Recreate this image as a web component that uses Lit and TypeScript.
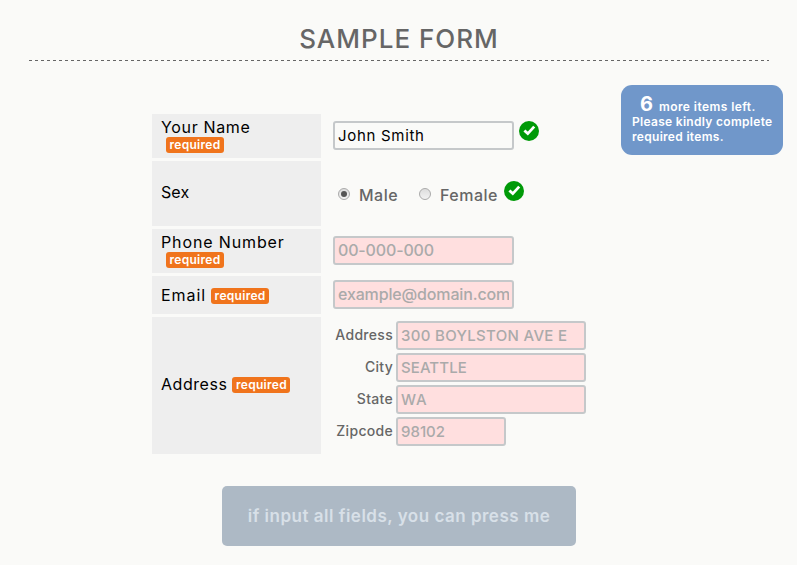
import { LitElement, html, css, svg } from "lit";
import { customElement } from "lit/decorators.js";

const check = html`<svg class="check" viewBox="0 0 20 20" width="20" height="20">
  ${svg`<circle cx="10" cy="10" r="10" fill="#009a08"></circle>
  <path d="M5.4 9.4 L8.8 12.6 L15.2 5.6" fill="none" stroke="#fff" stroke-width="2.8"></path>`}
</svg>`;

const required = html`<span class="required">required</span>`;

const addressFields = [
  { id: "street", label: "Address", placeholder: "300 BOYLSTON AVE E" },
  { id: "city", label: "City", placeholder: "SEATTLE" },
  { id: "state", label: "State", placeholder: "WA" },
  { id: "zip", label: "Zipcode", placeholder: "98102" },
];

@customElement("app-root")
export class AppRoot extends LitElement {
  static styles = css`
    :host {
      display: block;
      position: relative;
      box-sizing: border-box;
      height: 565px;
      overflow: hidden;
      background: #fafaf8;
      color: #666;
      font-family: Inter, "Open Sans", sans-serif;
    }
    * { box-sizing: border-box; }
    h1 {
      margin: 0 28px 0 29px;
      height: 61px;
      padding-top: 24px;
      text-align: center;
      font-size: 26px;
      line-height: 30px;
      font-weight: 500;
      letter-spacing: 1px;
      background: repeating-linear-gradient(90deg, #666 0 3px, transparent 3px 6px) left bottom / 100% 1px no-repeat;
    }
    .form {
      display: grid;
      grid-template-columns: 169px 1fr;
      grid-template-rows: 44px 65px 44px 38px 137px;
      gap: 3px 12.5px;
      margin: 53px 0 0 151.5px;
    }
    .head {
      display: flex;
      align-items: center;
      padding: 0 0 1px 9.5px;
      background: #eee;
      color: #000;
      font-size: 16px;
      line-height: 18px;
      letter-spacing: 0.65px;
    }
    .head.stack {
      flex-direction: column;
      align-items: flex-start;
      justify-content: flex-start;
      padding-top: 4px;
    }
    .head.stack .required { margin: 1px 0 0 5px; }
    .head.phone > span:first-child { letter-spacing: 0.87px; }
    .head.email { letter-spacing: 0.95px; }
    .head.address { letter-spacing: 0.55px; padding-bottom: 4px; }
    .head.sex { letter-spacing: 0.1px; padding-bottom: 4px; }
    .head.stack .required,
    .required {
      height: 16px;
      width: 58px;
      border-radius: 3px;
      background: #f0741c;
      color: #fff;
      font-size: 12px;
      line-height: 15px;
      font-weight: 600;
      letter-spacing: 0.3px;
      text-align: center;
    }
    .email .required,
    .address .required { margin: 3px 0 0 5px; }
    .cell { display: flex; align-items: center; padding-bottom: 2px; }
    input[type="text"] {
      width: 181px;
      height: 29px;
      margin: 0;
      padding: 0 3px;
      border: 2px solid #c5c8ca;
      border-radius: 3px;
      outline: none;
      background: #ffdfdf;
      color: #000;
      font: 500 16px Inter, sans-serif;
      letter-spacing: -0.15px;
    }
    input::placeholder { color: #aaa; opacity: 1; }
    input.filled {
      background: #fafaf8;
      font-size: 15px;
      font-weight: 400;
      letter-spacing: 0.7px;
    }
    .cell.name { padding-bottom: 1px; }
    .cell.name .check { margin: 0 0 9px 5px; }
    .sex-cell {
      font-size: 16px;
      font-weight: 500;
      line-height: 20px;
      letter-spacing: 0.5px;
      padding: 3px 0 0 5px;
    }
    .sex-cell .check { margin: 0 0 9px 6px; }
    .radio {
      width: 12px;
      height: 12px;
      margin: 0 9px 3px 0;
      border: 1px solid #aaa;
      border-radius: 50%;
      background: linear-gradient(#ddd, #f2f2f2);
      display: flex;
      align-items: center;
      justify-content: center;
    }
    .radio.on::before {
      content: "";
      width: 6px;
      height: 6px;
      border-radius: 50%;
      background: #555;
    }
    .male { width: 60px; }
    .lines {
      display: grid;
      grid-template-columns: 60px auto;
      grid-auto-rows: 29px;
      gap: 3px;
      align-content: start;
      justify-content: start;
      padding-top: 4px;
    }
    .lines label {
      text-align: right;
      font-size: 14px;
      line-height: 28px;
      font-weight: 500;
      letter-spacing: 0.3px;
    }
    .lines input[type="text"] { width: 190px; font-size: 15px; }
    .lines input#street { letter-spacing: 0.32px; }
    .lines input#city { letter-spacing: 0.1px; }
    .lines input#state { letter-spacing: 0.9px; }
    .lines input#zip { width: 110px; letter-spacing: 0; }
    .notice {
      position: absolute;
      left: 621px;
      top: 85px;
      width: 162px;
      height: 70px;
      padding: 9px 0 0 11px;
      border-radius: 11px;
      background: #7097ca;
      color: #fff;
      font-size: 12px;
      line-height: 15px;
      font-weight: 600;
      letter-spacing: 0.3px;
      white-space: nowrap;
    }
    .count {
      display: flex;
      align-items: baseline;
      height: 20px;
      padding-left: 8px;
      letter-spacing: 0.42px;
    }
    .count b {
      width: 19px;
      font-size: 20px;
      line-height: 20px;
      font-weight: 700;
      letter-spacing: 0;
    }
    .submit {
      display: block;
      width: 354px;
      height: 60px;
      margin: 32px 0 0 222px;
      padding: 0;
      border: 0;
      border-radius: 5px;
      background: #adb9c5;
      color: #d8e0e8;
      font: 600 17px Inter, sans-serif;
      letter-spacing: 0.5px;
    }
  `;

  render() {
    return html`
      <h1>SAMPLE FORM</h1>
      <div class="form">
        <div class="head stack"><span>Your Name</span>${required}</div>
        <div class="cell name"><input type="text" class="filled" .value=${"John Smith"} />${check}</div>

        <div class="head sex">Sex</div>
        <div class="cell sex-cell">
          <span class="radio on"></span><span class="male">Male</span>
          <span class="radio"></span><span>Female</span>${check}
        </div>

        <div class="head stack phone"><span>Phone Number</span>${required}</div>
        <div class="cell"><input type="text" placeholder="00-000-000" /></div>

        <div class="head email">Email ${required}</div>
        <div class="cell"><input type="text" placeholder="example@domain.com" /></div>

        <div class="head address">Address ${required}</div>
        <div class="lines">
          ${addressFields.map(
            (f) => html`<label for=${f.id}>${f.label}</label>
              <input id=${f.id} type="text" placeholder=${f.placeholder} />`
          )}
        </div>
      </div>
      <button class="submit" disabled>if input all fields, you can press me</button>
      <div class="notice">
        <div class="count"><b>6</b><span>more items left.</span></div>
        <div>Please kindly complete</div>
        <div>required items.</div>
      </div>
    `;
  }
}
